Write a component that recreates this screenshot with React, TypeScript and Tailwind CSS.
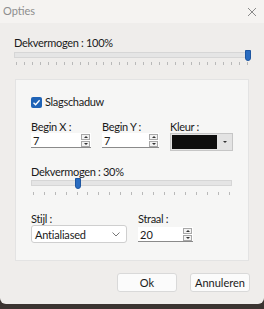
import React from "react";

const font = { fontFamily: 'Lato, "Noto Sans", Arial, sans-serif' };

const Ticks = ({ count }: { count: number }) => (
  <div className="flex justify-between px-[2px]">
    {Array.from({ length: count }).map((_, i) => (
      <div key={i} className="w-px h-[3px] bg-[#b9b9b9]" />
    ))}
  </div>
);

const Slider = ({ pos }: { pos: number }) => (
  <div className="relative h-[11px]">
    <div className="absolute left-0 right-0 top-[2px] h-[6px] bg-[#e5e5e5] border border-[#d6d6d6]" />
    <div
      className="absolute top-0 w-[6px] h-[11px] bg-[#2a6cc0] rounded-b-[3px] border border-[#1e56a0]"
      style={{ left: pos }}
    />
  </div>
);

const Spinner = () => (
  <div className="flex flex-col gap-px">
    <div className="w-[9px] h-[6px] border border-[#a8a8a8] bg-[#f3f3f3] flex items-center justify-center">
      <div className="w-0 h-0 border-l-[2px] border-r-[2px] border-b-[2px] border-l-transparent border-r-transparent border-b-[#333]" />
    </div>
    <div className="w-[9px] h-[6px] border border-[#a8a8a8] bg-[#f3f3f3] flex items-center justify-center">
      <div className="w-0 h-0 border-l-[2px] border-r-[2px] border-t-[2px] border-l-transparent border-r-transparent border-t-[#333]" />
    </div>
  </div>
);

const NumberBox = ({ value, width }: { value: string; width: string }) => (
  <div className={`flex items-center justify-between h-[15px] bg-white border-b border-[#8a8a8a] pl-[2px] pr-[1px] ${width}`}>
    <span className="text-[11px] text-[#1a1a1a] leading-[11px]">{value}</span>
    <Spinner />
  </div>
);

const Label = ({ children }: { children: React.ReactNode }) => (
  <div className="text-[11px] tracking-[-0.3px] text-[#1a1a1a] leading-[13px]">{children}</div>
);

export default function App() {
  return (
    <div className="w-[264px] h-[309px] bg-[#3b3431] overflow-hidden" style={font}>
      <div className="h-[304px] bg-[#efedeb] rounded-b-[6px] flex flex-col">
        <div className="h-[23px] bg-[#f5f3f1] flex items-center justify-between pl-[3px] pr-[7px]">
          <span className="text-[11px] text-[#8e8e8e]">Opties</span>
          <svg width="10" height="10" viewBox="0 0 10 10">
            <path d="M1 1 L9 9 M9 1 L1 9" stroke="#8a8a8a" strokeWidth="1" />
          </svg>
        </div>

        <div className="pl-[14px] pr-[14px] pt-[13px]">
          <Label>Dekvermogen : 100%</Label>
          <div className="mt-px">
            <Slider pos={231} />
          </div>
          <div className="mt-px">
            <Ticks count={30} />
          </div>
        </div>

        <div className="mx-[15px] mt-[14px] h-[182px] bg-[#f6f6f5] border border-[#e3e3e3] px-[15px] pt-[15px]">
          <div className="flex items-center gap-[3px] h-[14px]">
            <div className="w-[11px] h-[11px] rounded-[2px] bg-[#1f63b6] flex items-center justify-center">
              <svg width="9" height="9" viewBox="0 0 9 9">
                <path d="M1.5 4.8 L3.6 6.8 L7.6 2.2" stroke="#fff" strokeWidth="1.3" fill="none" />
              </svg>
            </div>
            <span className="text-[11px] tracking-[-0.3px] text-[#1a1a1a] leading-[14px]">Slagschaduw</span>
          </div>

          <div className="flex mt-[12px]">
            <div className="w-[71px]">
              <div className="h-[12px] text-[11px] tracking-[-0.3px] text-[#1a1a1a] leading-[11px]">Begin X :</div>
              <NumberBox value="7" width="w-[60px]" />
            </div>
            <div className="w-[68px]">
              <div className="h-[12px] text-[11px] tracking-[-0.3px] text-[#1a1a1a] leading-[11px]">Begin Y :</div>
              <NumberBox value="7" width="w-[57px]" />
            </div>
            <div>
              <div className="h-[12px] text-[11px] tracking-[-0.3px] text-[#1a1a1a] leading-[11px]">Kleur :</div>
              <div className="flex items-center w-[63px] h-[18px] bg-[#e3e3e3] border border-[#c6c6c6]">
                <div className="ml-[1px] w-[45px] h-[14px] bg-[#0d0d0d]" />
                <div className="flex-1 h-full flex items-center justify-center">
                  <div className="w-0 h-0 border-l-[2px] border-r-[2px] border-t-[2px] border-l-transparent border-r-transparent border-t-[#333]" />
                </div>
              </div>
            </div>
          </div>

          <div className="mt-[14px]">
            <Label>Dekvermogen : 30%</Label>
          </div>
          <div className="pr-[1px]">
            <Slider pos={44} />
          </div>
          <div className="mt-[3px] pr-[1px]">
            <Ticks count={19} />
          </div>

          <div className="flex mt-[17px]">
            <div className="w-[107px]">
              <Label>Stijl :</Label>
              <div className="w-[96px] h-[18px] bg-white border border-[#cfcfcf] rounded-[3px] flex items-center justify-between pl-[3px] pr-[6px]">
                <span className="text-[11px] tracking-[-0.2px] text-[#1a1a1a] leading-none">Antialiased</span>
                <svg width="8" height="5" viewBox="0 0 8 5">
                  <path d="M0.5 0.5 L4 4 L7.5 0.5" stroke="#777" strokeWidth="1" fill="none" />
                </svg>
              </div>
            </div>
            <div>
              <Label>Straal :</Label>
              <div className="mt-[2px]">
                <NumberBox value="20" width="w-[55px]" />
              </div>
            </div>
          </div>
        </div>

        <div className="flex justify-end gap-[13px] pr-[14px] mt-[12px]">
          <button className="w-[60px] h-[19px] bg-[#fbfbfb] border border-[#d9d9d9] rounded-[3px] text-[11px] text-[#1a1a1a] leading-none">
            Ok
          </button>
          <button className="w-[60px] h-[19px] bg-[#fbfbfb] border border-[#d9d9d9] rounded-[3px] text-[11px] text-[#1a1a1a] leading-none">
            Annuleren
          </button>
        </div>
      </div>
    </div>
  );
}
